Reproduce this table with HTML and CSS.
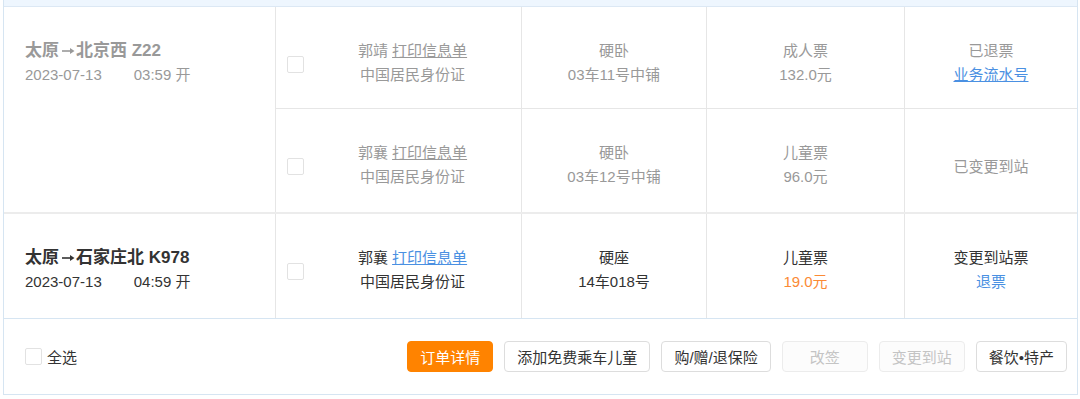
FILE: index.html
```html
<!DOCTYPE html>
<html lang="zh-CN">
<head>
<meta charset="utf-8">
<title>订单</title>
<link rel="stylesheet" href="styles.css">
</head>
<body>
<div class="order">
  <div class="order-top"></div>

  <div class="ticket done">
    <div class="train">
      <div class="route">太原<svg class="arrow" width="14" height="8" viewBox="0 0 14 8"><line x1="1" y1="4" x2="10" y2="4" stroke="currentColor" stroke-width="1.6"/><polygon points="9,1 13.5,4 9,7" fill="currentColor"/></svg>北京西 Z22</div>
      <div class="when"><span class="date">2023-07-13</span><span>03:59 开</span></div>
    </div>
    <div class="pax-list">
      <div class="pax-row">
        <div class="cell pax">
          <span class="check"></span>
          <div class="pax-info">
            <div>郭靖 <a class="print">打印信息单</a></div>
            <div>中国居民身份证</div>
          </div>
        </div>
        <div class="cell"><div>硬卧</div><div>03车11号中铺</div></div>
        <div class="cell"><div>成人票</div><div>132.0元</div></div>
        <div class="cell"><div>已退票</div><div><a class="link">业务流水号</a></div></div>
      </div>
      <div class="pax-row">
        <div class="cell pax">
          <span class="check"></span>
          <div class="pax-info">
            <div>郭襄 <a class="print">打印信息单</a></div>
            <div>中国居民身份证</div>
          </div>
        </div>
        <div class="cell"><div>硬卧</div><div>03车12号中铺</div></div>
        <div class="cell"><div>儿童票</div><div>96.0元</div></div>
        <div class="cell single"><div>已变更到站</div></div>
      </div>
    </div>
  </div>

  <div class="ticket active">
    <div class="train">
      <div class="route">太原<svg class="arrow" width="14" height="8" viewBox="0 0 14 8"><line x1="1" y1="4" x2="10" y2="4" stroke="currentColor" stroke-width="1.6"/><polygon points="9,1 13.5,4 9,7" fill="currentColor"/></svg>石家庄北 K978</div>
      <div class="when"><span class="date">2023-07-13</span><span>04:59 开</span></div>
    </div>
    <div class="pax-list">
      <div class="pax-row">
        <div class="cell pax">
          <span class="check"></span>
          <div class="pax-info">
            <div>郭襄 <a class="print link">打印信息单</a></div>
            <div>中国居民身份证</div>
          </div>
        </div>
        <div class="cell"><div>硬座</div><div>14车018号</div></div>
        <div class="cell"><div>儿童票</div><div class="price">19.0元</div></div>
        <div class="cell"><div>变更到站票</div><div><a class="link plain">退票</a></div></div>
      </div>
    </div>
  </div>

  <div class="footer">
    <label class="select-all"><span class="check"></span>全选</label>
    <div class="actions">
      <button class="btn primary">订单详情</button>
      <button class="btn">添加免费乘车儿童</button>
      <button class="btn">购/赠/退保险</button>
      <button class="btn disabled">改签</button>
      <button class="btn disabled">变更到站</button>
      <button class="btn">餐饮•特产</button>
    </div>
  </div>
</div>
</body>
</html>
```
FILE: styles.css
```css
* { box-sizing: border-box; }
html, body { margin: 0; padding: 0; background: #fff; }
body {
  font-family: "Liberation Sans", "Noto Sans CJK SC", sans-serif;
  font-size: 15px;
  color: #333;
}
.order {
  margin-left: 3px;
  width: 1075px;
  border: 1px solid #d6e5f2;
  border-top: none;
}
.order-top {
  height: 7px;
  background: #eef6fe;
  border-bottom: 1px solid #dce8f4;
}
.ticket {
  display: grid;
  grid-template-columns: 272px 1fr;
  border-bottom: 2px solid #ececec;
}
.ticket.active { border-bottom: none; }
.train {
  border-right: 1px solid #e6e6e6;
  padding: 32px 0 0 21px;
  line-height: 24px;
}
.route { font-size: 17px; font-weight: bold; }
.arrow { margin: 0 1px 0 2px; vertical-align: 1px; }
.when .date { margin-right: 32px; }
.pax-row {
  display: grid;
  grid-template-columns: 246px 185px 198px 1fr;
  height: 102px;
  border-bottom: 1px solid #e6e6e6;
}
.pax-row:last-child { border-bottom: none; height: 103px; }
.ticket.active .pax-row { height: 104px; }
.cell {
  border-right: 1px solid #e6e6e6;
  text-align: center;
  padding-top: 32px;
  line-height: 24px;
}
.cell:last-child { border-right: none; }
.cell.single { padding-top: 46px; }
.cell.pax {
  display: flex;
  align-items: flex-start;
  text-align: center;
}
.pax .check { margin: 17px 0 0 11px; }
.pax-info { flex: 1; }
.check {
  display: inline-block;
  width: 17px;
  height: 17px;
  border: 1px solid #e2e2e2;
  border-radius: 2px;
  background: #fff;
  flex-shrink: 0;
}
.done { color: #999; }
.print { text-decoration: underline; color: inherit; }
.link { color: #4a90e2; text-decoration: underline; }
.link.plain { text-decoration: none; }
.price { color: #fb8a35; }
.footer {
  border-top: 1px solid #d6e5f2;
  height: 76px;
  display: flex;
  align-items: center;
  justify-content: space-between;
  padding: 0 10px 0 21px;
}
.select-all {
  display: flex;
  align-items: center;
  gap: 5px;
  color: #333;
}
.actions { display: flex; gap: 11px; }
.btn {
  font-family: inherit;
  font-size: 15px;
  height: 31px;
  min-width: 86px;
  padding: 0 12px;
  border: 1px solid #dddddd;
  border-radius: 4px;
  background: #fff;
  color: #333;
}
.btn.primary {
  background: #ff8300;
  border-color: #ff8300;
  color: #fff;
}
.btn.disabled {
  color: #c4c4c4;
  border-color: #ececec;
  background: #fcfcfc;
}
```
